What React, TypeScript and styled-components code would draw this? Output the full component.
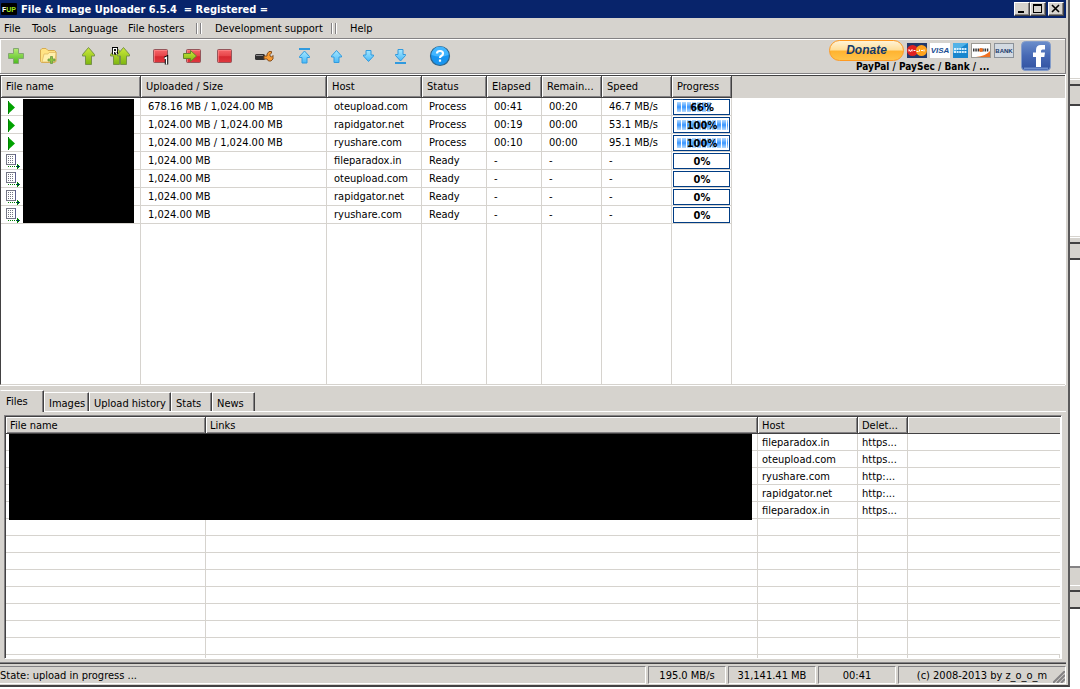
import React from "react";
import styled, { createGlobalStyle, css } from "styled-components";

const face = "#d6d3ce";
const shade = "#848284";
const dark = "#424142";
const grid = "#d6d3ce";

const Global = createGlobalStyle`
  *, *::before, *::after { box-sizing: border-box; }
  body { margin: 0; background: #fff; color: #000; }
  body, button, table {
    font-family: "DejaVu Sans Condensed", "DejaVu Sans", Tahoma, sans-serif;
    font-size: 11px;
    line-height: 14px;
  }
  button { margin: 0; padding: 0; border: 0; background: none; color: inherit; }
  svg { display: block; flex: none; }
`;

const Desktop = styled.div`
  display: flex;
  align-items: stretch;
  min-height: 100vh;
  padding-bottom: 2px;
`;

const Window = styled.main`
  flex: 1;
  min-width: 0;
  display: flex;
  flex-direction: column;
  background: ${face};
  padding-right: 2px;
  border-right: 2px solid #5a595a;
  border-bottom: 2px solid ${dark};
`;

const Behind = styled.div`
  width: 10px;
  flex: none;
  padding-top: 78px;
`;
const Sliver = styled.div<{ $h: number; $after: number }>`
  height: ${(p) => p.$h}px;
  margin-bottom: ${(p) => p.$after}px;
  background: ${face};
  border-top: 1px solid ${face};
  border-bottom: 2px solid ${dark};
  &::before {
    content: "";
    display: block;
    border-top: 1px solid #fff;
    height: 7px;
    border-bottom: 2px solid ${dark};
  }
`;
const SliverWide = styled.div`
  height: 18px;
  background: ${face};
  border-top: 2px solid ${shade};
`;

const TitleBar = styled.header`
  height: 18px;
  flex: none;
  display: flex;
  align-items: center;
  gap: 4px;
  padding: 0 2px 0 1px;
  background: #08246b;
  color: #fff;
`;
const Title = styled.h1`
  flex: 1;
  margin: 0;
  padding-top: 2px;
  font-size: 11px;
  line-height: 16px;
  font-weight: bold;
  white-space: pre;
`;
const Caption = styled.div`
  display: flex;
`;
const CaptionButton = styled.button<{ $apart?: boolean }>`
  width: 16px;
  height: 14px;
  margin-left: ${(p) => (p.$apart ? 2 : 0)}px;
  background: ${face};
  border: 1px solid;
  border-color: #fff ${dark} ${dark} #fff;
  box-shadow: inset -1px -1px ${shade};
`;

const MenuBar = styled.nav`
  height: 20px;
  flex: none;
  display: flex;
  align-items: center;
  gap: 12px;
  padding: 1px 0 0 4px;
`;
const MenuItem = styled.button<{ $w: number }>`
  width: ${(p) => p.$w}px;
  text-align: left;
  white-space: nowrap;
`;
const MenuBreak = styled.span`
  width: 6px;
  height: 11px;
  margin: 0 1px;
  border: solid;
  border-width: 0 1px;
  border-color: ${shade} #fff ${shade} ${shade};
  box-shadow: inset 1px 0 #fff, inset -1px 0 ${shade};
`;

const ToolBar = styled.div`
  height: 36px;
  flex: none;
  display: flex;
  align-items: center;
  border: 1px solid ${shade};
  border-left: 0;
  box-shadow: inset 1px 1px #fff, 0 1px #fff;
  margin-bottom: 1px;
`;
const Tools = styled.div`
  flex: 1;
  display: flex;
`;
const ToolButton = styled.button`
  width: 32px;
  height: 32px;
  display: grid;
  place-items: center;
`;
const Gap = styled.span`
  width: 8px;
`;
const Payments = styled.div`
  display: grid;
  justify-items: end;
  width: 186px;
  margin-right: 6px;
`;
const Methods = styled.div`
  display: flex;
  align-items: center;
  gap: 3px;
  height: 21px;
`;
const DonateButton = styled.button`
  width: 75px;
  height: 21px;
  border: 1px solid #ff9a21;
  border-radius: 11px;
  background: linear-gradient(#fff3d6, #ffdf9c 45%, #ffb431 55%, #ffc34a);
  color: #143a6b;
  font: italic bold 12px/17px "Liberation Sans", sans-serif;
`;
const MethodText = styled.div`
  width: 158px;
  font-size: 10px;
  font-weight: bold;
  line-height: 12px;
  white-space: nowrap;
`;
const Facebook = styled.button`
  width: 32px;
  height: 32px;
  margin-right: 13px;
`;

const List = styled.section`
  position: relative;
  flex: 1;
  margin-right: 1px;
  background: linear-gradient(${face} 22px, #fff 22px);
  border-left: 1px solid ${dark};
  border-top: 1px solid ${dark};
  border-bottom: 1px solid ${grid};
  box-shadow: 0 1px #fff, 1px 0 #fff;
  overflow: hidden;
`;
const LinkList = styled.section`
  position: relative;
  margin: 3px 4px 4px;
  border: 1px solid ${shade};
  border-right-color: #fff;
  border-bottom-color: #fff;
  box-shadow: inset 1px 1px ${dark};
  padding: 1px 1px 0 1px;
  background: #fff;
`;
const Table = styled.table<{ $wide?: boolean }>`
  table-layout: fixed;
  border-collapse: separate;
  border-spacing: 0;
  width: ${(p) => (p.$wide ? "100%" : "731px")};
`;
const Th = styled.th<{ $small?: boolean }>`
  height: ${(p) => (p.$small ? 17 : 22)}px;
  padding: ${(p) => (p.$small ? "2px 0 0 4px" : "1px 0 0 5px")};
  text-align: left;
  font-weight: normal;
  white-space: nowrap;
  background: ${face};
  border-right: 1px solid ${dark};
  border-bottom: 1px solid ${dark};
  box-shadow: inset 1px 1px #fff, inset -1px -1px ${shade};
  ${(p) =>
    p.$small &&
    css`
      &:last-child { border-right: 0; box-shadow: inset 1px 1px #fff; }
    `}
`;
const Td = styled.td<{ $h: number; $pad?: number }>`
  height: ${(p) => p.$h}px;
  padding: 1px 0 0 ${(p) => p.$pad ?? 7}px;
  white-space: nowrap;
  border-right: 1px solid ${grid};
  border-bottom: 1px solid ${grid};
`;
const ArtTd = styled(Td)`
  padding-top: 0;
`;
const LinkTd = styled(Td)`
  &:last-child { border-right: 0; }
`;
const Filler = styled(Td)`
  border-bottom: 0;
`;
const Redacted = styled.div<{ $top: number; $left: number; $w: number; $h: number }>`
  position: absolute;
  top: ${(p) => p.$top}px;
  left: ${(p) => p.$left}px;
  width: ${(p) => p.$w}px;
  height: ${(p) => p.$h}px;
  background: #000;
`;
const Progress = styled.div`
  position: relative;
  width: 57px;
  height: 16px;
  padding: 2px;
  border: 1px solid #003c84;
  background: #fff;
`;
const Bar = styled.div`
  height: 10px;
  margin-left: 1px;
  background:
    repeating-linear-gradient(90deg, transparent 0 4px, #fff 4px 5px),
    linear-gradient(#b5dbff, #3996ff 50%, #b5dbff);
`;
const Percent = styled.span`
  position: absolute;
  inset: 0;
  line-height: 15px;
  padding-left: 1px;
  text-align: center;
  font-weight: bold;
`;

const Tabs = styled.div`
  display: flex;
  align-items: flex-end;
  height: 27px;
  flex: none;
  border-bottom: 1px solid #fff;
`;
const Tab = styled.button<{ $w: number; $active?: boolean }>`
  width: ${(p) => p.$w}px;
  height: ${(p) => (p.$active ? 22 : 19)}px;
  margin-bottom: ${(p) => (p.$active ? -1 : 0)}px;
  padding: ${(p) => (p.$active ? "0 0 0 5px" : "3px 0 0 4px")};
  text-align: left;
  white-space: nowrap;
  background: ${face};
  border-top: 1px solid #fff;
  border-left: 1px solid ${(p) => (p.$active ? face : "#fff")};
  border-right: 1px solid ${dark};
  border-top-right-radius: 1px;
  box-shadow: inset -1px 0 ${shade};
`;

const StatusBar = styled.footer`
  display: flex;
  gap: 2px;
  height: 22px;
  flex: none;
  padding: 2px 0 1px;
  border-top: 1px solid ${dark};
  box-shadow: 0 -1px ${shade};
`;
const Status = styled.div<{ $w?: number }>`
  ${(p) => (p.$w ? `width: ${p.$w}px; text-align: center;` : "flex: 1;")}
  position: relative;
  line-height: 17px;
  border: 1px solid;
  border-color: ${shade} #fff #fff ${shade};
  white-space: nowrap;
  &:first-child { border-left: 0; }
`;
const Grip = styled.svg`
  position: absolute;
  right: 0;
  bottom: 0;
`;
const SharedPaint = styled.svg`
  position: absolute;
`;

const Defs = () => (
  <SharedPaint width="0" height="0" aria-hidden="true">
    <defs>
      <linearGradient id="green" x2="0" y2="1"><stop stopColor="#cdea3c" /><stop offset="1" stopColor="#7db510" /></linearGradient>
      <linearGradient id="plus" x2="0" y2="1"><stop stopColor="#b5ec72" /><stop offset="1" stopColor="#4dbb1f" /></linearGradient>
      <linearGradient id="red" x2="0" y2="1"><stop stopColor="#f7686b" /><stop offset=".5" stopColor="#e74449" /><stop offset=".55" stopColor="#d62830" /><stop offset="1" stopColor="#e0383e" /></linearGradient>
      <linearGradient id="sky" x2="0" y2="1"><stop stopColor="#a5e7ff" /><stop offset="1" stopColor="#4ab9f7" /></linearGradient>
      <linearGradient id="fb" x2="0" y2="1"><stop stopColor="#6b8ecb" /><stop offset=".5" stopColor="#4668b4" /><stop offset="1" stopColor="#3151a0" /></linearGradient>
    </defs>
  </SharedPaint>
);
const Icon = ({ children }: { children: React.ReactNode }) => (
  <svg width="24" height="24" viewBox="0 0 24 24" aria-hidden="true">{children}</svg>
);
const GreenArrow = ({ x = 0, y = 0 }) => (
  <path transform={`translate(${x} ${y})`} d="M12.500 3.500 18.500 10.500V12h-3v8.500h-6V12h-3v-1.500Z" fill="url(#green)" stroke="#78924a" strokeLinejoin="round" />
);
const RedBox = ({ x = 0 }) => (
  <g transform={`translate(${x} 0)`}>
    <rect x="5.500" y="5.500" width="14" height="13" rx="1" fill="url(#red)" stroke="#94555a" />
    <path d="M6.500 18V6.500h12.500" fill="none" stroke="#ff9494" opacity=".6" />
  </g>
);
const BlueUp = () => (
  <path d="M12.500 6.500 17.500 12v1H15v5.500h-5V13H7.500v-1Z" fill="url(#sky)" stroke="#319ade" strokeLinejoin="round" />
);
const BlueDown = () => (
  <path d="M12.500 17.500 17.500 12v-1H15V6.500h-5V11H7.500v1Z" fill="url(#sky)" stroke="#319ade" strokeLinejoin="round" />
);

const toolGroups: { label: string; art: React.ReactNode }[][] = [
  [
    { label: "Add files", art: <path d="M9.500 4.500h5v5H19.500v5h-5V19.500h-5v-5H4.500v-5h5Z" fill="url(#plus)" stroke="#84a573" strokeLinejoin="round" /> },
    {
      label: "Add folder",
      art: (
        <>
          <path d="M4.500 6 6 4.500h4l2 2h6.500L20 8v9.500l-2 1H5.500l-1-1Z" fill="#ffe384" stroke="#d6ab52" />
          <path d="m6 18 2-8h4l1-1.500h7l-1 9.500Z" fill="#fff0ad" stroke="#dcb45f" strokeWidth=".7" />
          <path d="M14.500 12.500h2v2.500H19v2h-2.500v2.500h-2V17H12v-2h2.500Z" fill="#8cc73c" stroke="#6c9646" strokeWidth=".8" />
        </>
      ),
    },
  ],
  [
    { label: "Upload", art: <GreenArrow /> },
    {
      label: "Upload with renaming",
      art: (
        <>
          <GreenArrow x={-4} />
          <GreenArrow x={3} />
          <path d="M5.500 10.500v-6h3v3h-3m2 0 1.500 3" fill="none" stroke="#000" strokeWidth="3" />
          <path d="M5.500 10.500v-6h3v3h-3m2 0 1.500 3" fill="none" stroke="#fff" strokeWidth="1.200" />
        </>
      ),
    },
  ],
  [
    {
      label: "Stop one",
      art: (
        <>
          <RedBox />
          <path d="m16.500 14.500 2-1v7" fill="none" stroke="#000" strokeWidth="3.400" />
          <path d="m16.500 14.500 2-1v7" fill="none" stroke="#fff" strokeWidth="1.400" />
        </>
      ),
    },
    { label: "Skip", art: (<><RedBox x={1} /><path d="M3.500 9.500h7V6.500l6 5.500-6 5.500v-3h-7Z" fill="url(#green)" stroke="#66842c" strokeLinejoin="round" /></>) },
    { label: "Stop", art: <RedBox /> },
  ],
  [
    {
      label: "Settings",
      art: (
        <>
          <rect x="3" y="10" width="10" height="6" rx="1.500" fill="#313031" />
          <path d="M4 11.500h7" stroke="#8c8a8c" />
          <path d="M12 12h3v-2l2-2.500h2.500V9L18 10.500v1.500l1.500 1 1.500-1.500V15l-2 2h-2.500l-1.500-2H12Z" fill="#f79a31" stroke="#7b4518" strokeWidth=".9" />
        </>
      ),
    },
  ],
  [
    { label: "Move to top", art: (<><path d="M7 5h11" stroke="#319ade" strokeWidth="2" /><path d="M12.500 7 17.500 12.500v1H15V19h-5v-5.500H7.500v-1Z" fill="url(#sky)" stroke="#319ade" /></>) },
    { label: "Move up", art: <BlueUp /> },
    { label: "Move down", art: <BlueDown /> },
    { label: "Move to bottom", art: (<><path d="M7 19h11" stroke="#319ade" strokeWidth="2" /><path d="M12.500 17 17.500 11.500v-1H15V5.500h-5v5H7.500v1Z" fill="url(#sky)" stroke="#319ade" /></>) },
  ],
  [
    {
      label: "Help",
      art: (
        <>
          <circle cx="12" cy="12" r="9.500" fill="#1895f0" stroke="#316589" strokeWidth="1.200" />
          <path d="M3.500 11a8.500 8.500 0 0 1 17 0q-8 3-17 0Z" fill="#42b6ff" />
          <path d="M9 9.500q0-2.500 3-2.500t3 2.500q0 1.500-1.500 2.300T12 14" fill="none" stroke="#fff" strokeWidth="2.200" />
          <rect x="10.900" y="15.500" width="2.200" height="2.200" fill="#fff" />
        </>
      ),
    },
  ],
];

const Cards = () => (
  <>
    <svg width="20" height="15" viewBox="0 0 20 15" role="img" aria-label="MasterCard">
      <rect width="20" height="15" fill="#21386b" />
      <circle cx="5.500" cy="7.500" r="5.500" fill="#e02020" /><circle cx="14.500" cy="7.500" r="5.500" fill="#ffa21c" />
      <path d="M2 8.500V6.500l1.500 2 1.500-2v2m1.500-1h2m1 1h2m1-2v2m1.500-1h2m1 1v-2" fill="none" stroke="#fff" />
    </svg>
    <svg width="20" height="15" viewBox="0 0 20 15" role="img" aria-label="Visa">
      <rect width="20" height="15" fill="#fff" />
      <text x="10" y="10" textAnchor="middle" fontFamily="Liberation Sans" fontSize="8" fontStyle="italic" fontWeight="bold" fill="#184d94">VISA</text>
    </svg>
    <svg width="15" height="15" viewBox="0 0 15 15" role="img" aria-label="American Express">
      <rect width="15" height="15" fill="#1886ce" /><path d="M0 0h15L0 10Z" fill="#52b2e7" />
      <path d="M1 6h13M1 9h13" stroke="#d6efff" strokeWidth="2" strokeDasharray="2 .6" />
    </svg>
    <svg width="20" height="15" viewBox="0 0 20 15" role="img" aria-label="Discover">
      <rect x=".5" y=".5" width="19" height="14" fill="#fff" stroke="#9c9a94" />
      <path d="M19 8v6H5q10-1 14-6Z" fill="#f07020" />
      <path d="M2 7h16" stroke="#393839" strokeWidth="3" strokeDasharray="1.500 .8" />
      <circle cx="10" cy="7" r="2" fill="#f07020" />
    </svg>
    <svg width="20" height="15" viewBox="0 0 20 15" role="img" aria-label="Bank">
      <rect x=".5" y=".5" width="19" height="14" fill="#d3dae2" stroke="#8c9299" />
      <text x="10" y="10" textAnchor="middle" fontFamily="Liberation Sans" fontSize="6" fontWeight="bold" fill="#18386b">BANK</text>
    </svg>
  </>
);

const RowIcon = ({ running }: { running: boolean }) =>
  running ? (
    <svg width="16" height="16" viewBox="0 0 16 16" aria-label="Running">
      <path d="M2 2v13l7-6.500Z" fill="#00a200" /><path d="M2.500 2v13" stroke="#008200" />
    </svg>
  ) : (
    <svg width="16" height="16" viewBox="0 0 16 16" aria-label="Waiting" shapeRendering="crispEdges">
      <path d="M.5 1.500h9v10h-9Z" fill="#fff" stroke="#737584" />
      <path d="M9.500 1v11" stroke="#5a5d8c" />
      <path d="M2 3.500h6M2 5.500h6M2 7.500h6M2 9.500h6" stroke="#737584" strokeDasharray="1 1" />
      <path d="M2 13.500h8" stroke="#008200" strokeDasharray="1 1" />
      <path d="M10 13.500h4M11.500 11v5M12.500 12v3" stroke="#008200" /><path d="M11 13.500h2" stroke="#00108c" />
    </svg>
  );

const uploadColumns: [string, number][] = [
  ["File name", 140], ["Uploaded / Size", 186], ["Host", 95], ["Status", 65],
  ["Elapsed", 55], ["Remain...", 60], ["Speed", 70], ["Progress", 60],
];
const uploads: [string, string, string, string, string, string, number][] = [
  ["678.16 MB / 1,024.00 MB", "oteupload.com", "Process", "00:41", "00:20", "46.7 MB/s", 66],
  ["1,024.00 MB / 1,024.00 MB", "rapidgator.net", "Process", "00:19", "00:00", "53.1 MB/s", 100],
  ["1,024.00 MB / 1,024.00 MB", "ryushare.com", "Process", "00:10", "00:00", "95.1 MB/s", 100],
  ["1,024.00 MB", "fileparadox.in", "Ready", "-", "-", "-", 0],
  ["1,024.00 MB", "oteupload.com", "Ready", "-", "-", "-", 0],
  ["1,024.00 MB", "rapidgator.net", "Ready", "-", "-", "-", 0],
  ["1,024.00 MB", "ryushare.com", "Ready", "-", "-", "-", 0],
];
const links = [
  ["fileparadox.in", "https..."], ["oteupload.com", "https..."], ["ryushare.com", "http:..."],
  ["rapidgator.net", "http:..."], ["fileparadox.in", "https..."],
  ...Array.from({ length: 8 }, () => ["", ""]),
];

export default function App() {
  return (
    <Desktop>
      <Global />
      <Defs />
      <Window>
        <TitleBar>
          <svg width="16" height="12" viewBox="0 0 16 12" aria-hidden="true">
            <rect width="16" height="12" rx="1" fill="#000" />
            <text x="1" y="9" fontFamily="Liberation Sans" fontSize="7" fontWeight="bold" fill="#fff">F<tspan fill="#9be31c">UP</tspan></text>
          </svg>
          <Title>{"File & Image Uploader 6.5.4  = Registered ="}</Title>
          <Caption>
            <CaptionButton aria-label="Minimize"><svg width="14" height="12"><path d="M3 9h6" stroke="#000" strokeWidth="2" /></svg></CaptionButton>
            <CaptionButton aria-label="Maximize"><svg width="14" height="12" shapeRendering="crispEdges"><path d="M2.500 1v8.500h8V1M2 2h9" fill="none" stroke="#000" /><path d="M2 2h9" stroke="#000" strokeWidth="2" /></svg></CaptionButton>
            <CaptionButton aria-label="Close" $apart><svg width="14" height="12"><path d="m3 2 7 7m0-7L3 9" stroke="#000" strokeWidth="1.600" /></svg></CaptionButton>
          </Caption>
        </TitleBar>

        <MenuBar>
          <MenuItem $w={16}>File</MenuItem>
          <MenuItem $w={25}>Tools</MenuItem>
          <MenuItem $w={47}>Language</MenuItem>
          <MenuItem $w={55}>File hosters</MenuItem>
          <MenuBreak />
          <MenuItem $w={103}>Development support</MenuItem>
          <MenuBreak />
          <MenuItem $w={24}>Help</MenuItem>
        </MenuBar>

        <ToolBar>
          <Tools>
            {toolGroups.map((group, i) => (
              <React.Fragment key={i}>
                {i > 0 && <Gap />}
                {group.map((t) => (
                  <ToolButton key={t.label} aria-label={t.label}><Icon>{t.art}</Icon></ToolButton>
                ))}
              </React.Fragment>
            ))}
          </Tools>
          <Payments>
            <Methods>
              <DonateButton>Donate</DonateButton>
              <Cards />
            </Methods>
            <MethodText>PayPal / PaySec / Bank / ...</MethodText>
          </Payments>
          <Facebook aria-label="Facebook">
            <svg width="32" height="32" viewBox="0 0 32 32">
              <rect x="1.500" y="1.500" width="29" height="29" rx="4" fill="url(#fb)" stroke="#839cca" />
              <path d="M4 28.500h24" stroke="#6f8fce" strokeWidth="2" />
              <path d="M16 27V17h-3v-4.500h3V10q0-5 5-5h4v4.500h-2.500q-1.500 0-1.500 1.500v1.500h4l-.7 4.500H21v10Z" fill="#fff" />
            </svg>
          </Facebook>
        </ToolBar>

        <List>
          <Table>
            <colgroup>{uploadColumns.map(([n, w]) => <col key={n} width={w} />)}</colgroup>
            <thead><tr>{uploadColumns.map(([n]) => <Th key={n}>{n}</Th>)}</tr></thead>
            <tbody>
              {uploads.map(([size, host, status, elapsed, left, speed, pct], i) => (
                <tr key={i}>
                  <ArtTd $h={18} $pad={5}><RowIcon running={status === "Process"} /></ArtTd>
                  <Td $h={18}>{size}</Td>
                  <Td $h={18}>{host}</Td>
                  <Td $h={18}>{status}</Td>
                  <Td $h={18}>{elapsed}</Td>
                  <Td $h={18}>{left}</Td>
                  <Td $h={18}>{speed}</Td>
                  <ArtTd $h={18} $pad={1}>
                    <Progress>
                      <Bar style={{ width: `${pct}%` }} />
                      <Percent>{pct}%</Percent>
                    </Progress>
                  </ArtTd>
                </tr>
              ))}
              <tr>{uploadColumns.map(([n]) => <Filler key={n} $h={160} />)}</tr>
            </tbody>
          </Table>
          <Redacted $top={23} $left={22} $w={111} $h={124} />
        </List>

        <Tabs>
          <Tab $w={44} $active>Files</Tab>
          <Tab $w={45}>Images</Tab>
          <Tab $w={82}>Upload history</Tab>
          <Tab $w={41}>Stats</Tab>
          <Tab $w={43}>News</Tab>
        </Tabs>

        <LinkList>
          <Table $wide>
            <colgroup><col width="200" /><col width="552" /><col width="100" /><col width="50" /><col /></colgroup>
            <thead>
              <tr><Th $small>File name</Th><Th $small>Links</Th><Th $small>Host</Th><Th $small>Delet...</Th><Th $small /></tr>
            </thead>
            <tbody>
              {links.map(([host, del], i) => (
                <tr key={i}>
                  <LinkTd $h={17} /><LinkTd $h={17} />
                  <LinkTd $h={17} $pad={4}>{host}</LinkTd>
                  <LinkTd $h={17} $pad={4}>{del}</LinkTd>
                  <LinkTd $h={17} />
                </tr>
              ))}
              <tr>{[0, 1, 2, 3, 4].map((n) => <Filler key={n} $h={3} />)}</tr>
            </tbody>
          </Table>
          <Redacted $top={18} $left={4} $w={743} $h={86} />
        </LinkList>

        <StatusBar>
          <Status>State: upload in progress ...</Status>
          <Status $w={78}>195.0 MB/s</Status>
          <Status $w={88}>31,141.41 MB</Status>
          <Status $w={78}>00:41</Status>
          <Status $w={168}>
            (c) 2008-2013 by z_o_o_m
            <Grip width="12" height="12" viewBox="0 0 12 12" aria-hidden="true">
              <path d="M0 12 12 0M4 12l8-8M8 12l4-4" stroke={shade} strokeWidth="2" />
            </Grip>
          </Status>
        </StatusBar>
      </Window>
      <Behind aria-hidden="true">
        <Sliver $h={28} $after={130} />
        <Sliver $h={24} $after={306} />
        <SliverWide />
        <Sliver $h={25} $after={0} />
      </Behind>
    </Desktop>
  );
}
